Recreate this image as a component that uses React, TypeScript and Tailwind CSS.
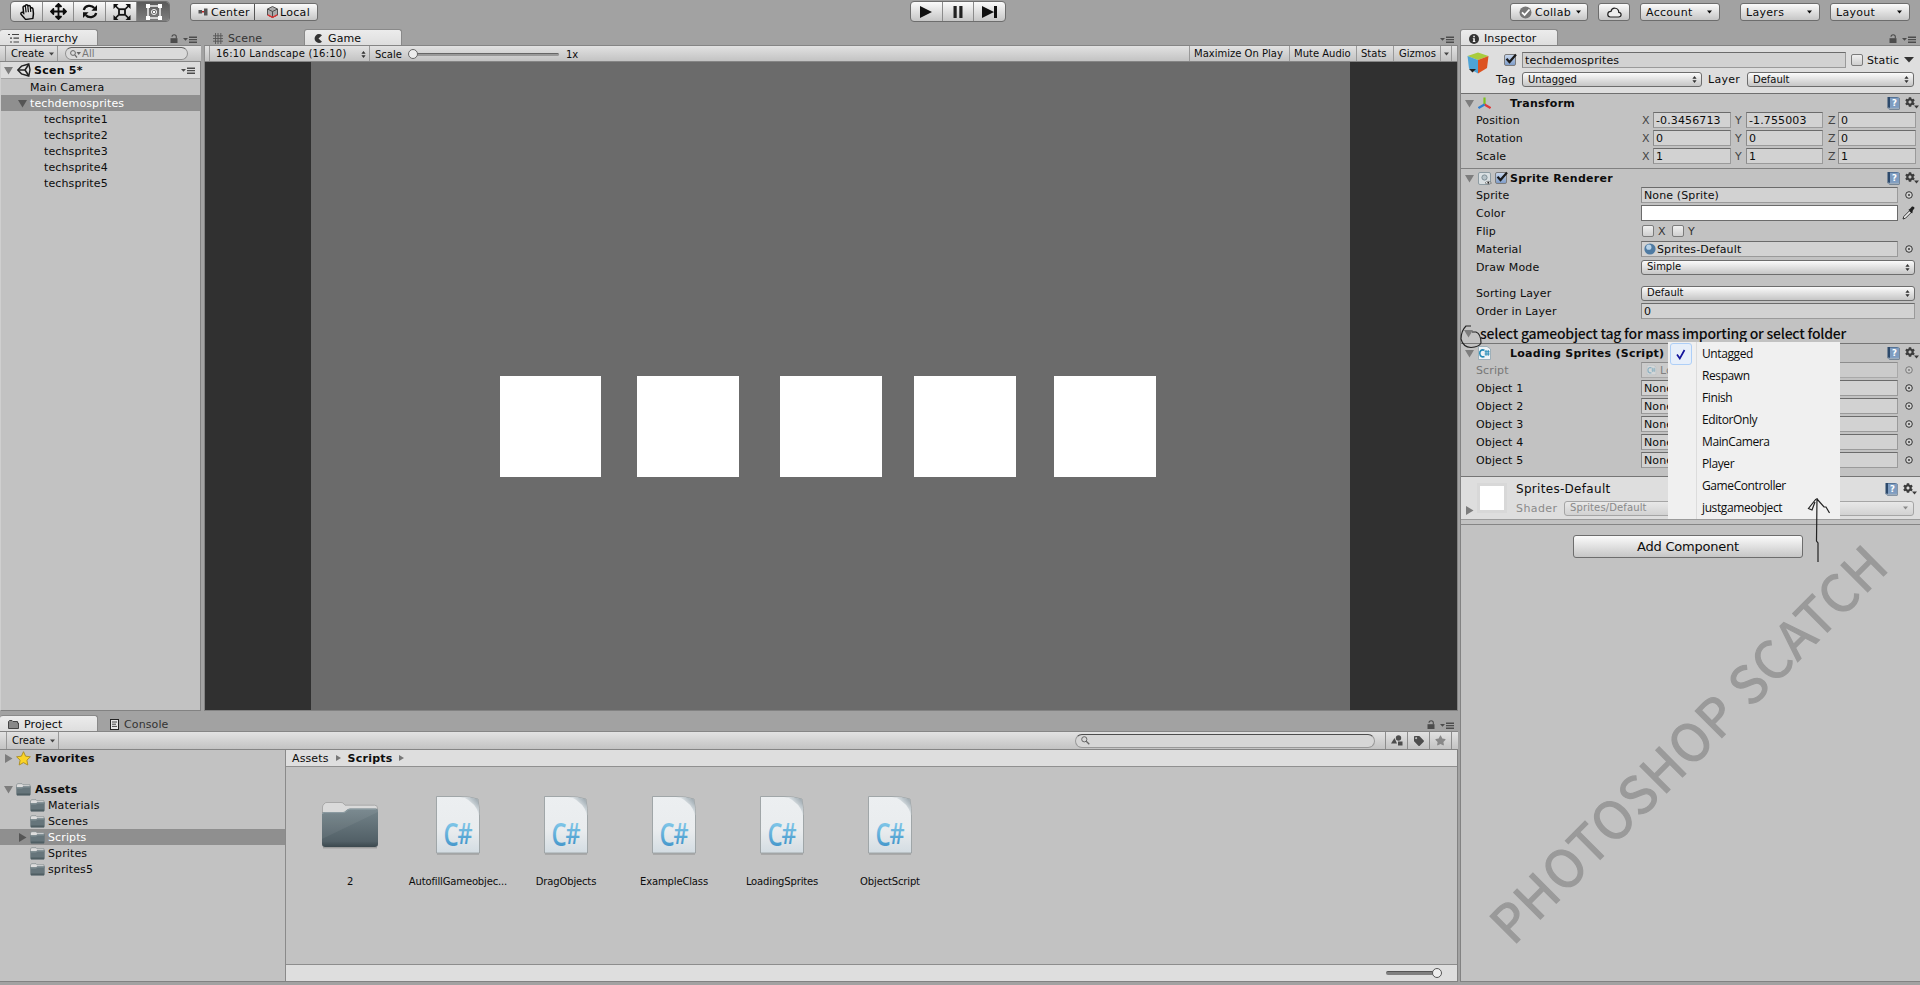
import type { ReactNode } from "react";
import { FaArrowsAlt, FaCog, FaRegHandPaper, FaStar, FaTag } from "react-icons/fa";

const hierarchy = ["techsprite1", "techsprite2", "techsprite3", "techsprite4", "techsprite5"];

const folders = [
  { name: "Materials" },
  { name: "Scenes" },
  { name: "Scripts", selected: true },
  { name: "Sprites" },
  { name: "sprites5" },
];

const scripts = ["AutofillGameobjec...", "DragObjects", "ExampleClass", "LoadingSprites", "ObjectScript"];

const transform = [
  { label: "Position", x: "-0.3456713", y: "-1.755003", z: "0" },
  { label: "Rotation", x: "0", y: "0", z: "0" },
  { label: "Scale", x: "1", y: "1", z: "1" },
];

const objects = ["Object 1", "Object 2", "Object 3", "Object 4", "Object 5"];

const tags = ["Untagged", "Respawn", "Finish", "EditorOnly", "MainCamera", "Player", "GameController", "justgameobject"];

const buttonFace = "bg-gradient-to-b from-[#fbfbfb] to-[#c6c6c6] border border-[#6d6d6d]";
const barFace = "bg-gradient-to-b from-[#e2e2e2] to-[#c3c3c3] border-y border-[#858585]";
const fieldFace = "bg-[#d2d2d2] border border-[#9a9a9a] border-t-[#6b6b6b] border-l-[#8b8b8b]";

/* ---------- icons ---------- */

const Fold = ({ open = true, dark = false }: { open?: boolean; dark?: boolean }) => (
  <svg width="9" height="9" viewBox="0 0 9 9" className="shrink-0">
    <path d={open ? "M0 1H9L4.5 8.5Z" : "M1 0V9L8.5 4.5Z"} fill={dark ? "#555" : "#7d7d7d"} />
  </svg>
);

const Caret = ({ className = "" }: { className?: string }) => (
  <svg width="5" height="4" viewBox="0 0 5 4" className={`shrink-0 ${className}`}>
    <path d="M0 0.5H5L2.5 3.5Z" fill="currentColor" />
  </svg>
);

const UpDown = () => (
  <svg width="5" height="7" viewBox="0 0 5 7" className="shrink-0">
    <path d="M2.5 0L4.6 2.8H0.4Z M2.5 7L4.6 4.2H0.4Z" fill="#333" />
  </svg>
);

const PanelMenu = () => (
  <svg width="14" height="7" viewBox="0 0 14 7" className="shrink-0">
    <path d="M0 2H5L2.5 4.8Z M6 0.5H14V2H6Z M6 3H14V4.3H6Z M6 5.5H14V7H6Z" fill="#4c4c4c" />
  </svg>
);

const Lock = () => (
  <svg width="8" height="9" viewBox="0 0 8 9" className="shrink-0">
    <path d="M0.5 4.2H7.5V9H0.5Z" fill="#4c4c4c" />
    <path d="M2 2.8C2 0.2 6.3 0.2 6.3 2.6V4.5" fill="none" stroke="#4c4c4c" strokeWidth="1.1" />
  </svg>
);

const SmallFolder = () => (
  <svg width="15" height="13" viewBox="0 0 15 13" className="shrink-0">
    <path d="M0.5 5V2L1.5 0.7H6L7 1.8H14V5Z" fill="#ddd" stroke="#808a8c" strokeWidth="0.7" />
    <path d="M0.3 4.3H6.2L7.2 3.3H14.7V11.5L14 12.5H1L0.3 11.5Z" fill="#66757b" />
    <path d="M0.8 5H6.5L7.5 4H14.2" fill="none" stroke="#8b999e" strokeWidth="0.8" />
    <path d="M1 10.5H14V12.3H1Z" fill="#4f5e63" />
  </svg>
);

const BigFolder = () => (
  <svg width="58" height="48" viewBox="0 0 58 48">
    <defs>
      <linearGradient id="folder" x1="0" y1="0" x2="0" y2="1">
        <stop offset="0" stopColor="#74848a" />
        <stop offset="0.85" stopColor="#526067" />
        <stop offset="1" stopColor="#3b484e" />
      </linearGradient>
    </defs>
    <path d="M1.5 12V6Q1.5 4.5 3 3L4 2Q4.5 1.5 6 1.5H20Q22 1.5 23 3L24 4.2H53.5Q56.5 4.2 56.5 7V12Z" fill="#dadada" stroke="#a0a0a0" strokeWidth="0.8" />
    <path d="M1 13Q1 11 3 11H22Q23.5 11 25 9.5Q27 7.5 29 7.5H55Q57 7.5 57 9.5V43Q57 46 54 46H4Q1 46 1 43Z" fill="url(#folder)" />
    <path d="M1.5 13Q1.5 11.6 3.2 11.6H22.2Q24 11.6 25.5 10Q27 8.1 29 8.1H55" fill="none" stroke="#92a2a8" strokeWidth="0.8" />
    <path d="M57 11L1 38V13Q1 11.5 3 11.5H22Q24 11.5 26 9.5L28 8H57Z" fill="#fff" opacity="0.06" />
    <path d="M2 46.8H56" stroke="#8d8d8d" strokeWidth="1" />
  </svg>
);

const ScriptFile = () => (
  <svg width="46" height="60" viewBox="0 0 46 60" className="overflow-visible">
    <defs>
      <linearGradient id="paper" x1="0" y1="0" x2="0" y2="1">
        <stop offset="0" stopColor="#eceff1" />
        <stop offset="0.6" stopColor="#e9ecee" />
        <stop offset="1" stopColor="#d3dce2" />
      </linearGradient>
      <linearGradient id="curl" x1="0" y1="1" x2="1" y2="0">
        <stop offset="0.5" stopColor="#e0e5e8" />
        <stop offset="0.75" stopColor="#b4bec4" />
        <stop offset="1" stopColor="#8f999f" />
      </linearGradient>
      <linearGradient id="glyph" x1="0" y1="0" x2="0" y2="1">
        <stop offset="0.3" stopColor="#7cc3e6" />
        <stop offset="0.8" stopColor="#4497cb" />
      </linearGradient>
    </defs>
    <path d="M2 59H44" stroke="#8f8f8f" strokeWidth="1.2" />
    <path d="M1.5 1.5H25Q35 1.5 43 4Q44.5 14 44.5 21V58H1.5Z" fill="url(#paper)" stroke="#9aa0a3" strokeWidth="0.9" />
    <path d="M28 2Q36 2 42.8 4.2Q44.2 13 44.2 20Q41 8 28 2Z" fill="url(#curl)" />
    <g fontFamily="Open Sans, sans-serif" fontWeight="600" fill="url(#glyph)">
      <text x="8.500" y="51" fontSize="33" textLength="15" lengthAdjust="spacingAndGlyphs">C</text>
      <text x="22.500" y="49" fontSize="29" textLength="15" lengthAdjust="spacingAndGlyphs">#</text>
    </g>
  </svg>
);

const Help = () => (
  <svg width="13" height="14" viewBox="0 0 13 14" className="shrink-0">
    <path d="M0.5 1H10L12.5 2V13.5H2.5L0.5 12Z" fill="#2d4a6c" />
    <path d="M3 1.5H12V12H3Z" fill="#7e9cc0" />
    <path d="M1 12L3 12.4H12" fill="none" stroke="#dfe6ee" strokeWidth="0.7" />
    <text x="5" y="10" fontFamily="DejaVu Sans, sans-serif" fontSize="8.5" fontWeight="700" fill="#fff">?</text>
  </svg>
);

const Gear = () => (
  <span className="flex w-[14px] items-end text-[#3c3c3c]">
    <FaCog size={10} className="mb-0.5" />
    <Caret className="-ml-px" />
  </span>
);

const Target = ({ faded = false }: { faded?: boolean }) => (
  <svg width="8" height="8" viewBox="0 0 8 8" className={faded ? "opacity-50" : ""}>
    <circle cx="4" cy="4" r="3.3" fill="#d2d2d2" stroke="#222" strokeWidth="0.9" />
    <rect x="3.2" y="3.2" width="1.6" height="1.6" fill="#222" />
  </svg>
);

const ScriptIcon = ({ className = "" }: { className?: string }) => (
  <svg width="13" height="14" viewBox="0 0 13 14" className={`shrink-0 ${className}`}>
    <path d="M0.5 0.5H9L12.5 3V13.5H0.5Z" fill="#eef3f6" stroke="#8fa5b0" strokeWidth="0.8" />
    <path d="M6.5 4.2C3 3 1.6 5.2 1.8 7.5C2 10.6 4.3 11.4 6.5 10.6" fill="none" stroke="#2389b5" strokeWidth="1.6" />
    <path d="M8 4V9.8M10.2 4V9.8M6.6 5.8H11.6M6.6 8H11.6" stroke="#2389b5" strokeWidth="1" />
  </svg>
);

const UnityLogo = () => (
  <svg width="14" height="14" viewBox="0 0 14 14" className="shrink-0">
    <path d="M0.8 7L4.5 3.2L11.8 1L13 6.8L11.8 13L4.5 10.8Z" fill="#e4e4e4" stroke="#222" strokeWidth="1.4" />
    <path d="M2 7H8L11.5 1.8M8 7L11.5 12.2" fill="none" stroke="#222" strokeWidth="1.6" />
  </svg>
);

/* ---------- controls ---------- */

const Tab = ({ icon, label, active = false, className = "" }: { icon: ReactNode; label: string; active?: boolean; className?: string }) => (
  <div
    className={`flex h-4 w-[98px] items-center gap-[5px] pt-0.5 ${
      active ? "rounded-t-[3px] border border-b-0 border-[#898989] bg-gradient-to-b from-[#ececec] to-[#dedede]" : "text-[#333]"
    } ${className}`}
  >
    {icon}
    <span>{label}</span>
  </div>
);

const Checkbox = ({ checked = false }: { checked?: boolean }) => (
  <span
    className={`relative h-3 w-3 shrink-0 rounded-[2px] border border-[#7b7b7b] bg-gradient-to-b ${
      checked ? "from-[#c7d6ec] to-[#7f9dc9]" : "from-[#f0f0f0] to-[#cfcfcf]"
    }`}
  >
    {checked && (
      <svg width="13" height="12" viewBox="0 0 13 12" className="absolute -top-0.5 left-0">
        <path d="M1.5 5.8L4.5 9L11 1.5" fill="none" stroke="#1a1a1a" strokeWidth="2.2" />
      </svg>
    )}
  </span>
);

const Dropdown = ({ label, className = "" }: { label: string; className?: string }) => (
  <div className={`flex h-[15px] items-center justify-between rounded-[3px] pr-1 pl-[5px] text-[10px] tracking-normal ${buttonFace} ${className}`}>
    <span>{label}</span>
    <UpDown />
  </div>
);

const ComponentTitle = ({ icon, title, checkbox = false }: { icon: ReactNode; title: string; checkbox?: boolean }) => (
  <div className="flex h-[17px] items-center pl-1 pt-px">
    <Fold />
    <span className="ml-1 flex w-[17px]">{icon}</span>
    <span className="flex w-[15px]">{checkbox && <Checkbox checked />}</span>
    <span className="flex-1 font-bold tracking-[0.26px]">{title}</span>
    <Help />
    <span className="ml-[5px] mr-px"><Gear /></span>
  </div>
);

const Row = ({ label, children, faded = false }: { label: string; children: ReactNode; faded?: boolean }) => (
  <div className="flex h-[18px] items-center pl-[15px]">
    <span className={`w-[165px] shrink-0 ${faded ? "text-[#777]" : ""}`}>{label}</span>
    {children}
  </div>
);

const ObjectField = ({ children, faded = false }: { children: ReactNode; faded?: boolean }) => (
  <>
    <div className={`flex h-4 w-[257px] items-center overflow-hidden pl-0.5 ${fieldFace} ${faded ? "opacity-60" : ""}`}>{children}</div>
    <span className="ml-[7px]"><Target faded={faded} /></span>
  </>
);

const TopButton = ({ label, className = "" }: { label: string; className?: string }) => (
  <div className={`flex h-[18px] items-center justify-between rounded-[3px] px-[5px] pr-[7px] tracking-[0.3px] ${buttonFace} ${className}`}>
    <span>{label}</span>
    <Caret />
  </div>
);

/* ---------- panels ---------- */

const MainToolbar = () => (
  <div className="flex h-7 shrink-0 items-start pl-[10px] pt-px">
    <div className={`flex h-[21px] w-[160px] overflow-hidden rounded-[4px] ${buttonFace} [&>span]:flex [&>span]:w-8 [&>span]:items-center [&>span]:justify-center [&>span]:border-r [&>span]:border-[#8b8b8b] [&>span]:pl-px`}>
      <span><FaRegHandPaper size={16} className="-rotate-6" /></span>
      <span><FaArrowsAlt size={17} /></span>
      <span>
        <svg width="16" height="15" viewBox="0 0 16 15">
          <path d="M1.8 6C3 1.2 9.5 0.6 12.3 4M14.2 9C13 13.8 6.5 14.4 3.7 11" fill="none" stroke="#111" strokeWidth="2.2" />
          <path d="M15 1V6.8H9.4Z M1 14V8.2H6.6Z" fill="#111" />
        </svg>
      </span>
      <span>
        <svg width="18" height="16" viewBox="0 0 18 16">
          <rect x="6" y="5.2" width="6" height="5.6" fill="#ddd" stroke="#111" strokeWidth="1.8" />
          <path d="M1.5 1L5.5 4.8M16.5 1L12.5 4.8M1.5 15L5.5 11.2M16.5 15L12.5 11.2" stroke="#111" strokeWidth="1.6" />
          <path d="M0.5 0H5.5L0.5 5Z M17.5 0H12.5L17.5 5Z M0.5 16H5.5L0.5 11Z M17.5 16H12.5L17.5 11Z" fill="#111" />
        </svg>
      </span>
      <span className="border-r-0! bg-gradient-to-b from-[#5a5a5a] to-[#7e7e7e]">
        <svg width="18" height="18" viewBox="0 0 18 18">
          <rect x="3" y="3" width="12" height="12" fill="none" stroke="#f2f2f2" strokeWidth="1.5" />
          <path d="M1 1H5V5H1Z M13 1H17V5H13Z M1 13H5V17H1Z M13 13H17V17H13Z" fill="#fff" />
          <circle cx="9" cy="9" r="2.6" fill="none" stroke="#eee" strokeWidth="1" />
          <rect x="8" y="8" width="2" height="2" fill="#fff" />
        </svg>
      </span>
    </div>
    <div className={`ml-5 mt-0.5 flex h-[18px] w-32 rounded-[3px] tracking-[0.3px] ${buttonFace}`}>
      <span className="flex w-16 items-center gap-[3px] border-r border-[#555] pl-[7px]">
        <svg width="10" height="8" viewBox="0 0 10 8">
          <rect x="0.5" y="2" width="3.5" height="3.5" fill="#555" />
          <path d="M4 3.7H6" stroke="#b22" strokeWidth="1.5" />
          <rect x="6" y="0.5" width="3.5" height="7" fill="#555" />
        </svg>
        Center
      </span>
      <span className="flex items-center gap-0.5 pl-3">
        <svg width="11" height="12" viewBox="0 0 11 12">
          <path d="M5.5 0.5L10.5 3V9L5.5 11.5L0.5 9V3Z" fill="#aaa" stroke="#444" strokeWidth="0.9" />
          <path d="M0.5 3L5.5 5.5L10.5 3M5.5 5.5V11" fill="none" stroke="#444" strokeWidth="0.9" />
          <path d="M0.7 8.8L5.5 11.3L10.3 8.8" fill="none" stroke="#d33" strokeWidth="1.4" />
        </svg>
        Local
      </span>
    </div>
    <div className={`ml-[592px] flex h-[21px] w-[96px] rounded-[4px] ${buttonFace} [&>span]:flex [&>span]:flex-1 [&>span]:items-center [&>span]:justify-center`}>
      <span className="border-r border-[#8b8b8b]">
        <svg width="12" height="12" viewBox="0 0 12 12"><path d="M0 0L12 6L0 12Z" fill="#111" /></svg>
      </span>
      <span className="border-r border-[#8b8b8b]">
        <svg width="10" height="12" viewBox="0 0 10 12"><path d="M0.5 0H3.7V12H0.5Z M6.3 0H9.5V12H6.3Z" fill="#222" /></svg>
      </span>
      <span>
        <svg width="16" height="12" viewBox="0 0 16 12"><path d="M0 0L12 6L0 12Z M12 0H15V12H12Z" fill="#111" /></svg>
      </span>
    </div>
    <div className="ml-[504px] mt-0.5 flex">
      <div className={`flex h-[18px] w-[78px] items-center rounded-[3px] pl-2 tracking-[0.3px] ${buttonFace}`}>
        <svg width="13" height="13" viewBox="0 0 13 13" className="mr-[3px] shrink-0">
          <circle cx="6.5" cy="6.5" r="6" fill="#777" />
          <path d="M3 6.3L5.6 9L10.5 3.5" fill="none" stroke="#fff" strokeWidth="1.8" />
        </svg>
        Collab
        <Caret className="ml-[5px]" />
      </div>
      <div className={`ml-[10px] flex h-[18px] w-8 items-center justify-center rounded-[3px] ${buttonFace}`}>
        <svg width="15" height="11" viewBox="0 0 15 11">
          <path d="M3.3 10H11.5C15 9.8 14.8 5.8 11.8 5.4C11.6 0.4 5 -0.3 4 4.3C0 4.2 -0.3 9.6 3.3 10Z" fill="#eee" stroke="#222" strokeWidth="1.2" />
        </svg>
      </div>
      <TopButton label="Account" className="ml-[10px] w-20" />
      <TopButton label="Layers" className="ml-5 w-20" />
      <TopButton label="Layout" className="ml-[10px] w-20" />
    </div>
  </div>
);

const HierarchyPanel = () => (
  <section className="flex w-[201px] flex-col">
    <div className="flex h-[17px] items-end pr-1">
      <Tab
        active
        label="Hierarchy"
        className="border-l-0 pl-2"
        icon={
          <svg width="11" height="9" viewBox="0 0 11 9" className="shrink-0">
            <path d="M0 0.5H2M4 0.5H11M2 4.2H4M5.5 4.2H11M2 8H4M5.5 8H11" stroke="#444" strokeWidth="1.2" />
          </svg>
        }
      />
      <span className="mb-0.5 ml-[72px]"><Lock /></span>
      <span className="mb-0.5 ml-[5px]"><PanelMenu /></span>
    </div>
    <div className={`flex h-[17px] items-center ${barFace}`}>
      <div className="ml-[5px] flex h-full w-[53px] items-center border-x border-[#999] pl-[5px] pt-px text-[10px] tracking-normal">
        Create
        <Caret className="ml-[5px] text-[#444]" />
      </div>
      <div className="ml-[7px] flex h-[13px] w-[123px] items-center rounded-full border border-[#8f8f8f] border-t-[#5e5e5e] bg-[#dadada] pl-1 text-[10px] text-[#777]">
        <svg width="11" height="8" viewBox="0 0 11 8">
          <circle cx="3" cy="3" r="2.4" fill="none" stroke="#666" />
          <path d="M4.8 4.8L7 7.5" stroke="#666" strokeWidth="1.2" />
          <path d="M6.5 2H11L8.7 5Z" fill="#666" />
        </svg>
        <span className="ml-px">All</span>
      </div>
    </div>
    <div className="flex flex-1 flex-col border-x border-b border-[#828282] border-l-[#cfcfcf] bg-[#c2c2c2]">
      <div className="flex h-[17px] items-center border-b border-[#a5a5a5] bg-[#dcdcdc] pl-[3px] pr-[5px] font-bold tracking-[0.26px]">
        <Fold />
        <span className="ml-1 mr-[3px]"><UnityLogo /></span>
        <span className="flex-1">Scen 5*</span>
        <PanelMenu />
      </div>
      <div className="flex h-4 items-center pl-[29px]">Main Camera</div>
      <div className="flex h-4 items-center bg-[#8f8f8f] pl-[17px] text-white">
        <Fold dark />
        <span className="ml-[3px]">techdemosprites</span>
      </div>
      {hierarchy.map((name) => (
        <div key={name} className="flex h-4 items-center pl-[43px]">{name}</div>
      ))}
    </div>
  </section>
);

const GamePanel = () => (
  <section className="ml-[3px] flex flex-1 flex-col">
    <div className="flex h-[17px] items-end">
      <Tab
        label="Scene"
        className="pl-[9px]"
        icon={
          <svg width="10" height="11" viewBox="0 0 10 11" className="shrink-0">
            <path d="M2.5 0V11M5 0V11M7.8 0V11M0 2.8H10M0 5.5H10M0 8.2H10" stroke="#555" strokeWidth="0.9" />
          </svg>
        }
      />
      <Tab
        active
        label="Game"
        className="ml-0.5 pl-[9px]"
        icon={
          <svg width="9" height="9" viewBox="0 0 9 9" className="shrink-0">
            <path d="M8 1.3A4.4 4.4 0 1 0 8 7.7L4.5 4.5Z" fill="#333" />
          </svg>
        }
      />
      <span className="mb-0.5 ml-auto mr-1"><PanelMenu /></span>
    </div>
    <div className={`flex h-[17px] items-center border-x border-x-[#8f8f8f] text-[10px] tracking-normal ${barFace}`}>
      <div className="ml-1 flex h-full w-[161px] items-center justify-between border-x border-[#999] pl-1.5 pr-[3px] pt-px">
        <span className="tracking-[0.22px]">16:10 Landscape (16:10)</span>
        <UpDown />
      </div>
      <span className="ml-[5px] pt-0.5">Scale</span>
      <div className="ml-[6px] flex items-center pt-px">
        <span className="z-10 h-[10px] w-[10px] rounded-full border border-[#666] bg-[#ececec]" />
        <span className="-ml-1 h-[3px] w-[145px] rounded-full border-t border-[#666] bg-[#999]" />
      </div>
      <span className="ml-[7px] pt-0.5">1x</span>
      <div className="ml-auto flex h-full [&>span]:flex [&>span]:items-center [&>span]:border-l [&>span]:border-[#999] [&>span]:pt-px">
        <span className="w-[100px] pl-1">Maximize On Play</span>
        <span className="w-[67px] pl-1">Mute Audio</span>
        <span className="w-[37px] pl-1">Stats</span>
        <span className="w-[47px] pl-[5px]">Gizmos</span>
        <span className="w-[11px] justify-center"><Caret className="text-[#444]" /></span>
        <span className="w-1.5" />
      </div>
    </div>
    <div className="flex flex-1 border border-t-0 border-[#828282] bg-[#303030] pr-[107px] pl-[106px]">
      <div className="flex flex-1 items-start bg-[#6b6b6b] pl-[189px] pt-[314px] [&>div]:h-[101px] [&>div]:bg-white">
        <div className="w-[101px]" />
        <div className="ml-9 w-[102px]" />
        <div className="ml-[41px] w-[102px]" />
        <div className="ml-8 w-[102px]" />
        <div className="ml-[38px] w-[102px]" />
      </div>
    </div>
  </section>
);

const ProjectPanel = () => (
  <section className="mt-[3px] flex h-[268px] shrink-0 flex-col">
    <div className="flex h-[17px] items-end">
      <Tab
        active
        label="Project"
        className="border-l-0 pl-2"
        icon={
          <svg width="11" height="9" viewBox="0 0 11 9" className="shrink-0">
            <path d="M0.5 8.5V1.5L1.5 0.5H4L5 1.5H9.5V3H10.5V8.5Z" fill="#888" stroke="#444" />
          </svg>
        }
      />
      <Tab
        label="Console"
        className="ml-3"
        icon={
          <svg width="9" height="11" viewBox="0 0 9 11" className="shrink-0">
            <rect x="0.5" y="0.5" width="8" height="10" fill="#e6e6e6" stroke="#222" />
            <path d="M2 3H7M2 5.2H6M2 7.4H7" stroke="#333" strokeWidth="0.9" />
          </svg>
        }
      />
      <span className="mb-0.5 ml-auto"><Lock /></span>
      <span className="mb-0.5 ml-[5px] mr-1"><PanelMenu /></span>
    </div>
    <div className={`flex h-[19px] items-center ${barFace}`}>
      <div className="ml-1.5 flex h-full w-[53px] items-center border-x border-[#999] pl-[5px] text-[10px] tracking-normal">
        Create
        <Caret className="ml-[5px] text-[#444]" />
      </div>
      <div className="ml-auto mr-[10px] flex h-[14px] w-[300px] items-center rounded-full border border-[#999] border-t-[#4d4d4d] bg-[#d6d6d6] pl-[5px]">
        <svg width="9" height="9" viewBox="0 0 9 9">
          <circle cx="3.3" cy="3.3" r="2.6" fill="none" stroke="#666" />
          <path d="M5.2 5.2L8.3 8.3" stroke="#666" strokeWidth="1.3" />
        </svg>
      </div>
      <div className="flex h-full text-[#4d4d4d] [&>span]:flex [&>span]:w-[22px] [&>span]:items-center [&>span]:justify-center [&>span]:border-l [&>span]:border-[#8d8d8d]">
        <span>
          <svg width="12" height="11" viewBox="0 0 12 11" fill="currentColor">
            <path d="M0 8.5L3.5 3L6 8.5Z" />
            <circle cx="7.5" cy="3" r="2.7" />
            <rect x="7" y="6.5" width="4.5" height="4" />
          </svg>
        </span>
        <span><FaTag size={10} /></span>
        <span><FaStar size={11} className="text-[#888]" /></span>
        <span className="w-[7px]!" />
      </div>
    </div>
    <div className="flex flex-1 border-b border-r border-[#828282]">
      <div className="w-[286px] border-r border-[#8a8a8a] bg-[#c2c2c2]">
        <div className="flex h-[17px] items-center pl-1 font-bold tracking-[0.26px]">
          <Fold open={false} />
          <svg width="15" height="15" viewBox="0 0 15 15" className="ml-[3px] mr-1">
            <path d="M7.5 0.7L9.6 5.2L14.4 5.8L10.9 9.2L11.8 14L7.5 11.6L3.2 14L4.1 9.2L0.6 5.8L5.4 5.2Z" fill="#fbd426" stroke="#a98b1e" strokeWidth="0.9" />
          </svg>
          Favorites
        </div>
        <div className="mt-[14px] flex h-4 items-center pl-1 font-bold tracking-[0.26px]">
          <Fold />
          <span className="ml-[3px] mr-1"><SmallFolder /></span>
          Assets
        </div>
        {folders.map((f) => (
          <div key={f.name} className={`flex h-4 items-center pl-[18px] ${f.selected ? "bg-[#8f8f8f] text-white" : ""}`}>
            <span className="w-3">{f.selected && <Fold open={false} dark />}</span>
            <span className="mr-[3px]"><SmallFolder /></span>
            {f.name}
          </div>
        ))}
      </div>
      <div className="flex flex-1 flex-col bg-[#c2c2c2]">
        <div className="flex h-[17px] items-center border-b border-[#909090] bg-[#dedede] pl-1.5">
          Assets
          <svg width="5" height="6" viewBox="0 0 5 6" className="ml-[7px] mr-[7px]"><path d="M0 0L5 3L0 6Z" fill="#777" /></svg>
          <span className="font-bold tracking-[0.26px]">Scripts</span>
          <svg width="5" height="6" viewBox="0 0 5 6" className="ml-[6px]"><path d="M0 0L5 3L0 6Z" fill="#777" /></svg>
        </div>
        <div className="flex flex-1 pl-[10px] pt-[27px] text-[10px] tracking-[-0.15px]">
          <div className="flex w-[108px] flex-col items-center">
            <div className="flex h-[62px] items-center"><BigFolder /></div>
            <span className="mt-[21px]">2</span>
          </div>
          {scripts.map((name) => (
            <div key={name} className="flex w-[108px] flex-col items-center">
              <div className="flex h-[62px] items-center"><ScriptFile /></div>
              <span className="mt-[21px]">{name}</span>
            </div>
          ))}
        </div>
        <div className="flex h-[17px] items-center justify-end border-t border-[#8d8d8d] bg-[#dedede] pr-[15px]">
          <span className="h-1 w-[50px] rounded-full border-t border-[#555] bg-[#808080]" />
          <span className="-ml-1 h-[10px] w-[10px] rounded-full border border-[#555] bg-[#eee]" />
        </div>
      </div>
    </div>
  </section>
);

const TagMenu = () => (
  <div className="absolute left-[1668px] top-[342px] flex h-[177px] w-[172px] bg-[#f0f0f0] font-['Open_Sans','Noto_Sans',sans-serif] text-[12px] tracking-[-0.4px]">
    <div className="w-[29px] border-r border-[#dcdcdc] pl-0.5 pt-px">
      <div className="flex h-[22px] w-[22px] items-center justify-center rounded-[3px] border border-[#aecff7] bg-[#e7effa]">
        <svg width="10" height="11" viewBox="0 0 10 11">
          <path d="M1 5.5L3.8 9.5L8.5 1" fill="none" stroke="#14149c" strokeWidth="1.7" />
        </svg>
      </div>
    </div>
    <div className="pl-[5px] pt-px">
      {tags.map((tag) => (
        <div key={tag} className="flex h-[22px] items-center">{tag}</div>
      ))}
    </div>
  </div>
);

const InspectorPanel = () => (
  <section className="ml-[2px] flex w-[460px] flex-col">
    <div className="flex h-[17px] items-end">
      <Tab
        active
        label="Inspector"
        className="pl-2"
        icon={
          <svg width="10" height="10" viewBox="0 0 10 10" className="shrink-0">
            <circle cx="5" cy="5" r="5" fill="#333" />
            <path d="M4.3 1.8H5.8V3.2H4.3Z M3.8 4.2H5.8V7.2H6.4V8H3.8V7.2H4.3V5H3.8Z" fill="#fff" />
          </svg>
        }
      />
      <span className="mb-0.5 ml-auto"><Lock /></span>
      <span className="mb-0.5 ml-[5px] mr-1"><PanelMenu /></span>
    </div>
    <div className="flex flex-1 flex-col border border-r-0 border-[#828282] bg-[#c2c2c2]">
      <div className="flex h-12 border-b border-[#6f6f6f] bg-[#dedede] pt-[6px]">
        <svg width="22" height="22" viewBox="0 0 22 22" className="ml-[6px] shrink-0">
          <path d="M11 0.5L21.5 4L11 8L0.5 4Z" fill="#a9cc3c" />
          <path d="M0.5 4L11 8V21.5L2 16.5Z" fill="#4ea3d6" />
          <path d="M21.5 4L11 8V21.5L20 16Z" fill="#dd5220" />
          <path d="M2 17H9L5.5 20.5Z" fill="#222" />
        </svg>
        <div className="flex-1">
          <div className="flex h-4 items-center">
            <span className="ml-[15px] flex"><Checkbox checked /></span>
            <div className={`ml-1.5 flex h-4 w-[324px] items-center pl-0.5 ${fieldFace}`}>techdemosprites</div>
            <span className="ml-[5px] flex"><Checkbox /></span>
            <span className="ml-1 w-[33px]">Static</span>
            <svg width="10" height="6" viewBox="0 0 10 6" className="ml-1"><path d="M0 0H10L5 5.5Z" fill="#333" /></svg>
          </div>
          <div className="mt-1 flex h-[15px] items-center">
            <span className="ml-[7px] w-[26px] tracking-[0.3px]">Tag</span>
            <Dropdown label="Untagged" className="w-[180px]" />
            <span className="ml-[6px] w-[39px] tracking-[0.3px]">Layer</span>
            <Dropdown label="Default" className="w-[167px]" />
          </div>
        </div>
      </div>

      <div className="h-[75px] border-b border-[#808080]">
        <ComponentTitle
          title="Transform"
          icon={
            <svg width="13" height="13" viewBox="0 0 13 13" fill="none" strokeWidth="2.2">
              <path d="M6.5 7.5V0.5" stroke="#7fc21c" />
              <path d="M6.5 7.5L12.5 11" stroke="#e03a3a" />
              <path d="M6.5 7.5L0.5 11" stroke="#2f7fd0" />
            </svg>
          }
        />
        {transform.map((row) => (
          <Row key={row.label} label={row.label}>
            <span className="ml-px w-[11px] text-[#444]">X</span>
            <div className={`flex h-4 w-[78px] items-center pl-0.5 ${fieldFace}`}>{row.x}</div>
            <span className="ml-1 w-[11px] text-[#444]">Y</span>
            <div className={`flex h-4 w-[77px] items-center pl-0.5 ${fieldFace}`}>{row.y}</div>
            <span className="ml-[5px] w-[10px] text-[#444]">Z</span>
            <div className={`flex h-4 w-[78px] items-center pl-0.5 ${fieldFace}`}>{row.z}</div>
          </Row>
        ))}
      </div>

      <div className="h-[156px]">
        <ComponentTitle
          title="Sprite Renderer"
          checkbox
          icon={
            <svg width="14" height="13" viewBox="0 0 14 13">
              <rect x="0.5" y="0.5" width="12" height="12" rx="1.5" fill="#d9dfe2" stroke="#8d9ba2" />
              <circle cx="6.5" cy="5.5" r="2.6" fill="#b7c3c9" stroke="#7e8e96" />
              <path d="M7 11Q10 7.5 13.5 11Q10 13.5 7 11Z" fill="#fff" stroke="#555" strokeWidth="0.6" />
              <circle cx="10.3" cy="10.8" r="1" fill="#222" />
            </svg>
          }
        />
        <Row label="Sprite"><ObjectField>None (Sprite)</ObjectField></Row>
        <Row label="Color">
          <div className="h-4 w-[257px] border border-[#6b6b6b] bg-white" />
          <svg width="13" height="14" viewBox="0 0 13 14" className="ml-1">
            <path d="M1 13L1.8 10.5L7.5 4.8L9.2 6.5L3.5 12.2Z" fill="#eee" stroke="#222" strokeWidth="0.9" />
            <path d="M6.5 3.8L8 2.8L10 0.6Q12 0 12.6 2L10.8 4.6L10.3 7.2L9.2 7Z" fill="#222" />
          </svg>
        </Row>
        <Row label="Flip">
          <span className="ml-px flex"><Checkbox /></span>
          <span className="ml-1 w-[14px] text-[#333]">X</span>
          <Checkbox />
          <span className="ml-1 text-[#333]">Y</span>
        </Row>
        <Row label="Material">
          <ObjectField>
            <svg width="12" height="12" viewBox="0 0 12 12" className="mr-px shrink-0">
              <circle cx="6" cy="6" r="5.6" fill="#4f7ba3" />
              <circle cx="4.8" cy="4.2" r="2.6" fill="#b9d3e8" />
            </svg>
            Sprites-Default
          </ObjectField>
        </Row>
        <Row label="Draw Mode"><Dropdown label="Simple" className="w-[274px]" /></Row>
        <div className="h-2" />
        <Row label="Sorting Layer"><Dropdown label="Default" className="w-[274px]" /></Row>
        <Row label="Order in Layer"><div className={`flex h-4 w-[274px] items-center pl-0.5 ${fieldFace}`}>0</div></Row>
      </div>

      <div className="flex h-[19px] items-center border-b border-[#757575] pb-0.5 pl-[3px]">
        <Fold />
        <span className="ml-[7px] whitespace-nowrap font-['Noto_Sans_CJK_SC',sans-serif] text-[14px] font-medium leading-none tracking-[-0.23px]">
          select gameobject tag for mass importing or select folder
        </span>
      </div>

      <div className="h-[133px] border-b border-[#757575]">
        <ComponentTitle title="Loading Sprites (Script)" icon={<ScriptIcon />} />
        <Row label="Script" faded>
          <ObjectField faded>
            <ScriptIcon className="ml-px mr-0.5 scale-75 opacity-60" />
            <span className="text-[#555]">Lo</span>
          </ObjectField>
        </Row>
        {objects.map((name) => (
          <Row key={name} label={name}><ObjectField>None</ObjectField></Row>
        ))}
      </div>

      <div className="flex h-[43px] border-b border-[#9b9b9b] bg-[#dedede]">
        <span className="mt-[29px] ml-1"><Fold open={false} /></span>
        <div className="mt-[6px] ml-[3px] h-[30px] w-[30px] border-[3px] border-[#d8d8d8] bg-white" />
        <div className="ml-[9px] flex-1">
          <div className="mt-1 flex h-4 items-center">
            <span className="flex-1 text-[12px] tracking-[0.3px]">Sprites-Default</span>
            <Help />
            <span className="ml-[5px] mr-[3px]"><Gear /></span>
          </div>
          <div className="mt-[3px] flex h-4 items-center text-[#8a8a8a]">
            <span className="w-[48px] tracking-[0.4px]">Shader</span>
            <div className="flex h-[15px] w-[350px] items-center justify-between rounded-[3px] border border-[#a5a5a5] bg-gradient-to-b from-[#e8e8e8] to-[#d2d2d2] pl-[5px] pr-[5px] text-[10px]">
              Sprites/Default
              <Caret />
            </div>
          </div>
        </div>
      </div>
      <div className="h-[5px] border-b border-[#858585]" />
      <div className={`ml-[112px] mt-[10px] flex h-[23px] w-[230px] items-center justify-center rounded-[3px] text-[13px] tracking-[-0.22px] ${buttonFace}`}>
        Add Component
      </div>
    </div>
  </section>
);

export default function App() {
  return (
    <div className="relative flex h-[985px] w-[1920px] flex-col overflow-hidden bg-[#a2a2a2] font-['DejaVu_Sans',Verdana,sans-serif] text-[11px] leading-none tracking-[0.12px] text-[#0c0c0c]">
      <MainToolbar />
      <div className="flex h-[954px] shrink-0">
        <div className="flex w-[1458px] shrink-0 flex-col">
          <div className="flex flex-1">
            <HierarchyPanel />
            <GamePanel />
          </div>
          <ProjectPanel />
        </div>
        <InspectorPanel />
      </div>

      <TagMenu />

      {/* pen marks and watermark drawn over the editor */}
      <svg className="pointer-events-none absolute inset-0" width="1920" height="985" fill="none">
        <path d="M1471 326H1466Q1461 331 1461 339Q1463 347 1471 347.5Q1479 347 1481 343Q1481 334 1476 332H1472" stroke="#222" strokeWidth="1.1" />
        <path d="M1817 498L1816.5 541L1818 543V562M1816 499L1808.5 508.5L1812 510L1815 502M1817 499L1824 507L1826 507L1829.5 513" stroke="#222" strokeWidth="1.2" />
        <text
          transform="translate(1513 946.5) rotate(-45)"
          fontFamily="Noto Sans CJK SC, sans-serif"
          fontSize="51.5"
          textLength="534"
          fill="#9a9a9a"
          stroke="#9a9a9a"
          strokeWidth="1.2"
        >
          PHOTOSHOP SCATCH
        </text>
      </svg>
    </div>
  );
}
